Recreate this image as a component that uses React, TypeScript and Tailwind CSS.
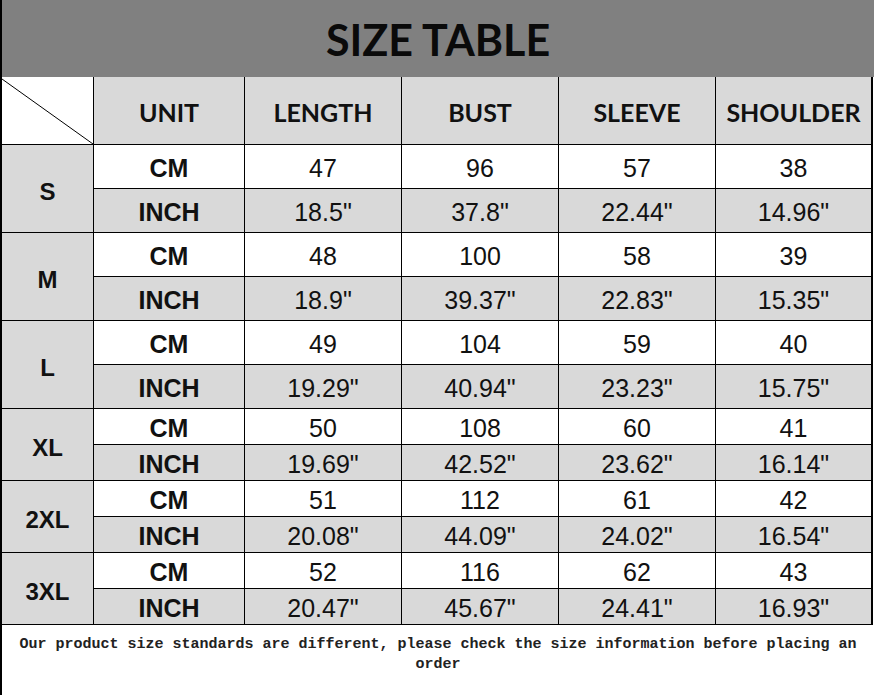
import React from 'react';

type SizeRow = { size: string; cm: string[]; inch: string[] };

const sizes: SizeRow[] = [
  { size: 'S', cm: ['47', '96', '57', '38'], inch: ['18.5"', '37.8"', '22.44"', '14.96"'] },
  { size: 'M', cm: ['48', '100', '58', '39'], inch: ['18.9"', '39.37"', '22.83"', '15.35"'] },
  { size: 'L', cm: ['49', '104', '59', '40'], inch: ['19.29"', '40.94"', '23.23"', '15.75"'] },
  { size: 'XL', cm: ['50', '108', '60', '41'], inch: ['19.69"', '42.52"', '23.62"', '16.14"'] },
  { size: '2XL', cm: ['51', '112', '61', '42'], inch: ['20.08"', '44.09"', '24.02"', '16.54"'] },
  { size: '3XL', cm: ['52', '116', '62', '43'], inch: ['20.47"', '45.67"', '24.41"', '16.93"'] },
];

const headers = ['UNIT', 'LENGTH', 'BUST', 'SLEEVE', 'SHOULDER'];

const cell = "flex items-center justify-center pt-[5px] text-[25px] text-[#111] font-['Liberation_Sans',Arial,sans-serif]";

const App: React.FC = () => {
  return (
    <div className="w-[874px] h-[695px] bg-white overflow-hidden">
      {/* title bar */}
      <div className="h-[77px] bg-[#808080] border-l-2 border-black flex items-center justify-center">
        <h1 className="text-[43px] font-bold text-[#0a0a0a] leading-none pt-[2px] font-['Lato','Open_Sans',sans-serif]">
          SIZE TABLE
        </h1>
      </div>

      {/* table */}
      <div className="w-[873px] grid gap-px bg-black border-l-2 border-r-2 border-b border-black grid-cols-[91px_150px_156px_156px_156px_155px] grid-rows-[67px_repeat(6,43px)_repeat(6,35px)]">
        <div className="bg-white relative">
          <svg className="absolute inset-0 w-full h-full" viewBox="0 0 91 67" preserveAspectRatio="none">
            <line x1="0" y1="2" x2="91" y2="67" stroke="#000" strokeWidth="1" />
          </svg>
        </div>
        {headers.map((h) => (
          <div
            key={h}
            className="bg-[#d9d9d9] flex items-center justify-center pt-[4px] text-[25px] font-bold text-[#111] font-['Lato','Open_Sans',sans-serif]"
          >
            {h}
          </div>
        ))}

        {sizes.map((s) => (
          <React.Fragment key={s.size}>
            <div className="row-span-2 bg-[#d9d9d9] flex items-center justify-center pt-[6px] text-[24px] font-bold text-[#111] font-['Liberation_Sans',Arial,sans-serif]">
              {s.size}
            </div>
            <div className={`${cell} bg-white font-bold`}>CM</div>
            {s.cm.map((v, i) => (
              <div key={'c' + i} className={`${cell} bg-white`}>
                {v}
              </div>
            ))}
            <div className={`${cell} bg-[#d9d9d9] font-bold`}>INCH</div>
            {s.inch.map((v, i) => (
              <div key={'i' + i} className={`${cell} bg-[#d9d9d9]`}>
                {v}
              </div>
            ))}
          </React.Fragment>
        ))}
      </div>

      {/* note */}
      <div className="h-[70px] border-l-2 border-black pt-[10px] px-2">
        <p className="text-center text-[15px] leading-[20px] font-bold text-[#222] font-['Liberation_Mono','DejaVu_Sans_Mono',monospace]">
          Our product size standards are different, please check the size information before placing an order
        </p>
      </div>
    </div>
  );
};

export default App;
